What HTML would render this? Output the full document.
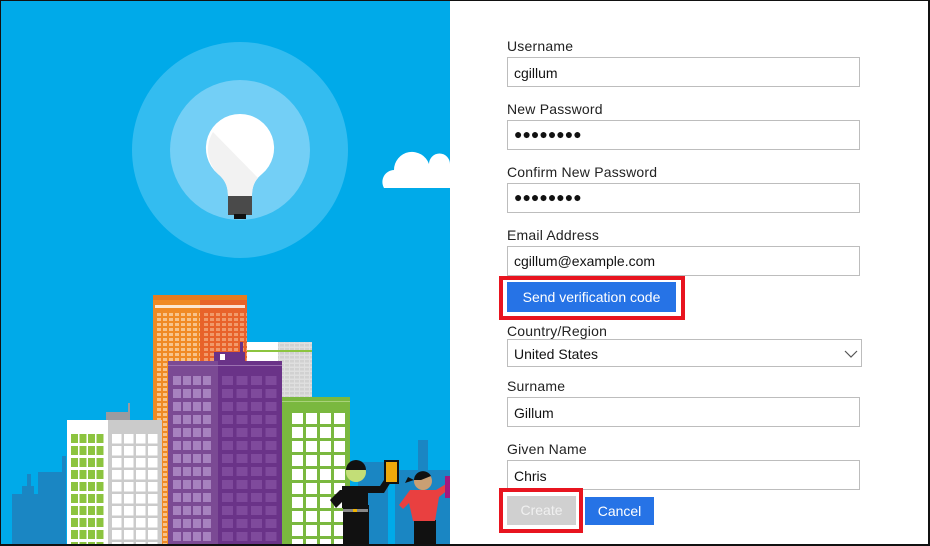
<!DOCTYPE html>
<html><head><meta charset="utf-8"><style>
*{margin:0;padding:0;box-sizing:border-box}
body{width:930px;height:546px;overflow:hidden;background:#fff;font-family:"Liberation Sans",Arial,sans-serif;position:relative}
.frame{position:absolute;left:0;top:0;width:930px;height:546px;border:1px solid #111;border-right-width:2px;border-bottom-width:2px;pointer-events:none}
.lbl{position:absolute;left:507px;font-size:14px;color:#222;letter-spacing:0.2px}
.inp{position:absolute;left:507px;width:353px;height:30px;border:1px solid #bdbdbd;font-size:14px;color:#111;padding:7px 0 0 6px}
.dots{font-size:14px;letter-spacing:0px;padding-top:5px}
.btn{position:absolute;color:#fff;font-size:14px;text-align:center;background:#2673e6}
.red{position:absolute;border:4px solid #e8141f}
</style></head><body>
<svg width="450" height="546" style="position:absolute;left:0;top:0">
<defs>
<pattern id="og" x="157" y="313" width="6" height="5" patternUnits="userSpaceOnUse"><rect width="4" height="3" fill="#f7c38a"/></pattern>
<pattern id="or" x="204" y="313" width="6" height="5" patternUnits="userSpaceOnUse"><rect width="4" height="3" fill="#f19a6a"/></pattern>
<pattern id="gw" x="71" y="434" width="8.5" height="12" patternUnits="userSpaceOnUse"><rect width="7" height="9" fill="#8cc43f"/></pattern>
<pattern id="ww" x="112" y="434" width="12" height="12" patternUnits="userSpaceOnUse"><rect width="9.5" height="9.5" fill="#fff"/></pattern>
<pattern id="pl" x="173" y="376" width="10" height="13" patternUnits="userSpaceOnUse"><rect width="8" height="9" fill="#a782bf"/></pattern>
<pattern id="pr" x="222" y="376" width="14.5" height="13" patternUnits="userSpaceOnUse"><rect width="11" height="9" fill="#7f4a9c"/></pattern>
<pattern id="gr" x="292" y="413" width="14" height="14" patternUnits="userSpaceOnUse"><rect width="11" height="11" fill="#fff"/></pattern>
<pattern id="sg" x="280" y="352" width="5" height="4" patternUnits="userSpaceOnUse"><rect width="4" height="2.5" fill="#dcdcdc"/></pattern>
</defs>
<rect width="450" height="546" fill="#00aae9"/>
<circle cx="240" cy="150" r="108" fill="#33bcf0"/>
<circle cx="240" cy="150" r="70" fill="#73cff6"/>
<path d="M240 114a34 34 0 0 0-22 60c6 5 10 11 10 22h24c0-11 4-17 10-22a34 34 0 0 0-22-60z" fill="#fff"/>
<path d="M213 132a34 34 0 0 0 5 42c6 5 10 11 10 22h24c0-8 2-14 6-18z" fill="#f2f2f2"/>
<rect x="228" y="196" width="24" height="19" fill="#4a4a4a"/>
<rect x="234" y="214" width="12" height="5" fill="#111"/>
<path d="M384 188a12 12 0 0 1 10-18a18 18 0 0 1 35-6a10 10 0 0 1 21 0v24z" fill="#fff"/>
<g fill="#1a86c3">
<rect x="12" y="497" width="8" height="49"/><rect x="12" y="494" width="35" height="52" transform="translate(0,0)"/>
<rect x="22" y="486" width="12" height="10"/><rect x="27" y="474" width="4" height="14"/>
<rect x="38" y="472" width="25" height="74"/><rect x="62" y="456" width="4" height="90"/>
<rect x="358" y="462" width="30" height="84"/><rect x="418" y="440" width="10" height="106"/><rect x="395" y="470" width="55" height="76"/>
</g>
<rect x="246" y="342" width="66" height="204" fill="#fff"/>
<rect x="278" y="342" width="34" height="204" fill="url(#sg)"/>
<rect x="278" y="342" width="34" height="204" fill="#c9c9c9" opacity=".6"/>
<rect x="246" y="350" width="66" height="2" fill="#8cc43f"/>
<rect x="153" y="295" width="47" height="251" fill="#f08a24"/>
<rect x="200" y="295" width="47" height="251" fill="#e8622a"/>
<rect x="153" y="295" width="94" height="5" fill="#e57b1f"/>
<rect x="155" y="305" width="90" height="3" fill="#fff" opacity=".8"/>
<rect x="155" y="313" width="45" height="233" fill="url(#og)"/>
<rect x="202" y="313" width="45" height="233" fill="url(#or)"/>
<rect x="106" y="412" width="24" height="9" fill="#9b9ba0"/><rect x="128" y="403" width="2" height="10" fill="#9b9ba0"/>
<rect x="67" y="420" width="42" height="126" fill="#fff"/>
<rect x="108" y="420" width="54" height="126" fill="#cbcbcb"/>
<rect x="71" y="434" width="34" height="112" fill="url(#gw)"/>
<rect x="112" y="434" width="48" height="112" fill="url(#ww)"/>
<rect x="214" y="352" width="31" height="10" fill="#6a3388"/><rect x="240" y="342" width="3" height="12" fill="#6a3388"/>
<rect x="220" y="354" width="5" height="6" fill="#fff"/>
<rect x="168" y="361" width="50" height="185" fill="#7b4a94"/>
<rect x="218" y="361" width="64" height="185" fill="#6a3388"/>
<rect x="168" y="365" width="114" height="1" fill="#9a70b0"/>
<rect x="173" y="376" width="40" height="170" fill="url(#pl)"/>
<rect x="222" y="376" width="58" height="170" fill="url(#pr)"/>
<rect x="282" y="397" width="68" height="149" fill="#7ab83f"/>
<rect x="282" y="401" width="68" height="1" fill="#a9d27a"/>
<rect x="292" y="413" width="56" height="133" fill="url(#gr)"/>
<!-- man -->
<rect x="343" y="505" width="26" height="41" fill="#111"/>
<path d="M340 490l-10 10 6 8 8-8 v-10zM362 486h18l8-12 6 3-10 16h-20z" fill="#111"/>
<rect x="342" y="486" width="26" height="22" fill="#111"/>
<rect x="343" y="509" width="25" height="3" fill="#888"/><rect x="353" y="509" width="4" height="3" fill="#f0b400"/>
<circle cx="356" cy="472" r="10" fill="#c3de77"/>
<path d="M346 470a10 10 0 0 1 20 0z" fill="#111"/>
<rect x="384" y="460" width="15" height="24" fill="#111"/><rect x="386" y="462" width="11" height="20" fill="#f0a90a"/>
<!-- woman -->
<rect x="414" y="520" width="22" height="26" fill="#111"/>
<path d="M410 490h26l10-6 3 5-10 8-4 24h-22l-4-18-6 6-4-4z" fill="#e94040"/>
<circle cx="423" cy="481" r="9" fill="#c99f73"/>
<path d="M414 480a9 9 0 0 1 17-4l-10 4zM414 480l-9 3 3-6z" fill="#111"/>
<rect x="445" y="476" width="5" height="22" fill="#a3187e"/>
</svg>

<div class="lbl" style="top:38px">Username</div>
<div class="inp" style="top:57px">cgillum</div>
<div class="lbl" style="top:101px">New Password</div>
<div class="inp dots" style="top:120px">●●●●●●●●</div>
<div class="lbl" style="top:164px">Confirm New Password</div>
<div class="inp dots" style="top:183px">●●●●●●●●</div>
<div class="lbl" style="top:227px">Email Address</div>
<div class="inp" style="top:246px;padding-top:6px">cgillum@example.com</div>
<div class="red" style="left:499px;top:276px;width:186px;height:44px"></div>
<div class="btn" style="left:507px;top:282px;width:169px;height:30px;line-height:30px">Send verification code</div>
<div class="lbl" style="top:323px">Country/Region</div>
<div class="inp" style="top:339px;width:355px;height:28px;padding-top:6px">United States
<svg width="14" height="8" style="position:absolute;right:3px;top:10px"><path d="M1 1l6 6 6-6" fill="none" stroke="#555" stroke-width="1.2"/></svg></div>
<div class="lbl" style="top:378px">Surname</div>
<div class="inp" style="top:397px">Gillum</div>
<div class="lbl" style="top:441px">Given Name</div>
<div class="inp" style="top:460px">Chris</div>
<div class="red" style="left:499px;top:488px;width:84px;height:45px"></div>
<div class="btn" style="left:507px;top:496px;width:69px;height:29px;line-height:29px;background:#d0d0d0;color:#f0f0f0">Create</div>
<div class="btn" style="left:585px;top:497px;width:69px;height:28px;line-height:28px">Cancel</div>
<div class="frame"></div>
</body></html>
